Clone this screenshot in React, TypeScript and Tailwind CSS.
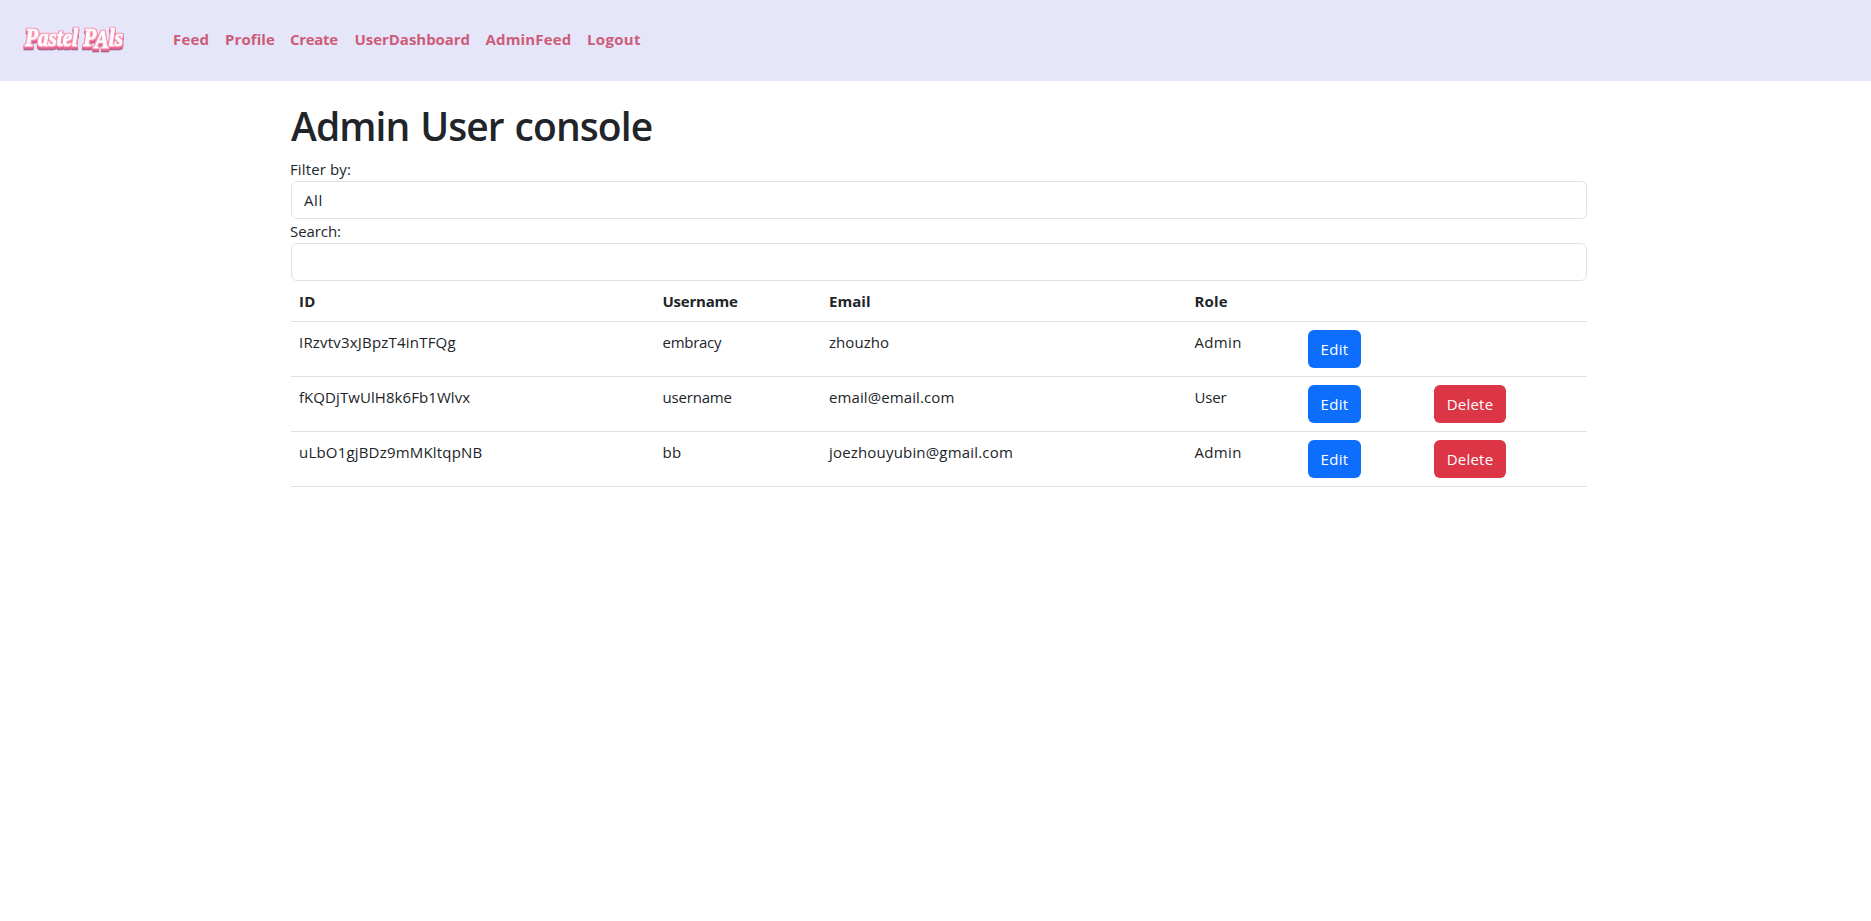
type User = {
  id: string;
  idTracking: string;
  username: string;
  nameTracking: string;
  email: string;
  emailTracking: string;
  role: string;
  roleTracking: string;
  removable: boolean;
};

const users: User[] = [
  {
    id: "IRzvtv3xJBpzT4inTFQg", idTracking: "tracking-[0.2px]",
    username: "embracy", nameTracking: "tracking-[-0.27px]",
    email: "zhouzho", emailTracking: "tracking-[0.05px]",
    role: "Admin", roleTracking: "tracking-[0.35px]", removable: false,
  },
  {
    id: "fKQDjTwUlH8k6Fb1Wlvx", idTracking: "tracking-[0.07px]",
    username: "username", nameTracking: "tracking-[-0.19px]",
    email: "email@email.com", emailTracking: "tracking-[0.1px]",
    role: "User", roleTracking: "tracking-[-0.17px]", removable: true,
  },
  {
    id: "uLbO1gjBDz9mMKltqpNB", idTracking: "tracking-[0.19px]",
    username: "bb", nameTracking: "tracking-[0.3px]",
    email: "joezhouyubin@gmail.com", emailTracking: "tracking-[0.18px]",
    role: "Admin", roleTracking: "tracking-[0.35px]", removable: true,
  },
];

const links = [
  { label: "Feed", style: "w-9 tracking-[0.18px]" },
  { label: "Profile", style: "w-[49px] tracking-[0.09px]" },
  { label: "Create", style: "w-[48.5px] tracking-[-0.3px]" },
  { label: "UserDashboard", style: "w-[115px] tracking-[-0.04px]" },
  { label: "AdminFeed", style: "w-[85.5px] tracking-[0.15px]" },
  { label: "Logout", style: "w-[54px] tracking-[0.32px]" },
];

function Logo() {
  return (
    <svg
      viewBox="0 0 150 81"
      className="h-[81px] w-[150px] shrink-0 font-['Liberation_Serif',serif] text-[25px] font-bold italic"
      aria-label="Pastel PAls"
    >
      <defs>
        <filter id="extrude" x="10" y="18" width="130" height="44" filterUnits="userSpaceOnUse" colorInterpolationFilters="sRGB">
          <feMorphology in="SourceAlpha" operator="dilate" radius="1" result="fat" />
          <feFlood floodColor="#f59cb9" />
          <feComposite in2="fat" operator="in" result="rim" />
          <feFlood floodColor="#ea5f8b" />
          <feComposite in2="fat" operator="in" result="deep" />
          <feOffset in="deep" dy="1" result="deep1" />
          <feOffset in="deep" dy="2" result="deep2" />
          <feFlood floodColor="#8f6488" />
          <feComposite in2="fat" operator="in" />
          <feOffset dy="3" result="shade" />
          <feMerge>
            <feMergeNode in="shade" />
            <feMergeNode in="deep2" />
            <feMergeNode in="deep1" />
            <feMergeNode in="rim" />
            <feMergeNode in="SourceGraphic" />
          </feMerge>
        </filter>
      </defs>
      <text
        x="25"
        y="45.5"
        fill="#fffafb"
        stroke="#fffafb"
        strokeWidth="0.7"
        textLength="98"
        lengthAdjust="spacingAndGlyphs"
        filter="url(#extrude)"
      >
        Pastel P<tspan dy="2">A</tspan><tspan dy="-2">ls</tspan>
      </text>
    </svg>
  );
}

const button = "flex h-[38px] items-center justify-center rounded-md pb-px text-white";
const cell = "border-b border-[#dee2e6] px-2 pt-2 pb-0 align-top";

export default function App() {
  return (
    <div className="min-h-screen bg-white font-['Open_Sans',sans-serif] text-[15px] leading-6 font-[370] text-[#212529]">
      <nav className="flex h-[81px] bg-[#e6e6fa]">
        <Logo />
        <ul className="flex gap-4 pt-[27px] pl-[23px] font-bold text-[#cd5c78]">
          {links.map((l) => (
            <li key={l.label} className={`${l.style} whitespace-nowrap`}>{l.label}</li>
          ))}
        </ul>
      </nav>
      <main className="ml-[291px] w-[1296px] pt-5">
        <h1 className="mb-[7px] pt-px text-[39px] leading-[48px] font-[540] tracking-[-0.9px] [word-spacing:1.5px]">Admin User console</h1>
        <div className="-ml-px tracking-[0.13px]">Filter by:</div>
        <div className="flex h-[38px] items-center rounded-md border border-[#dee2e6] px-3 tracking-[0.6px]">All</div>
        <div className="-ml-px tracking-[-0.08px]">Search:</div>
        <input aria-label="Search" className="block h-[38px] w-full rounded-md border border-[#dee2e6] px-3 outline-none" />
        <table className="w-full table-fixed border-separate border-spacing-0 text-left">
          <colgroup>
            <col className="w-[363.5px]" />
            <col className="w-[166.5px]" />
            <col className="w-[365.5px]" />
            <col className="w-[113.5px]" />
            <col className="w-[126px]" />
            <col className="w-[161px]" />
          </colgroup>
          <thead>
            <tr className="h-[41px] font-bold">
              <th className={`${cell} tracking-[0.3px]`}>ID</th>
              <th className={`${cell} tracking-[-0.23px]`}>Username</th>
              <th className={`${cell} tracking-[0.06px]`}>Email</th>
              <th className={`${cell} tracking-[0.18px]`}>Role</th>
              <th className={cell} />
              <th className={cell} />
            </tr>
          </thead>
          <tbody>
            {users.map((u) => (
              <tr key={u.id} className="h-[55px]">
                <td className={`${cell} ${u.idTracking}`}>{u.id}</td>
                <td className={`${cell} ${u.nameTracking}`}>{u.username}</td>
                <td className={`${cell} ${u.emailTracking}`}>{u.email}</td>
                <td className={`${cell} ${u.roleTracking}`}>{u.role}</td>
                <td className={cell}>
                  <button className={`${button} w-[53px] bg-[#0d6efd] tracking-[0.3px]`}>Edit</button>
                </td>
                <td className={cell}>
                  {u.removable && <button className={`${button} w-[72px] bg-[#dc3545] tracking-[0.22px]`}>Delete</button>}
                </td>
              </tr>
            ))}
          </tbody>
        </table>
      </main>
    </div>
  );
}
